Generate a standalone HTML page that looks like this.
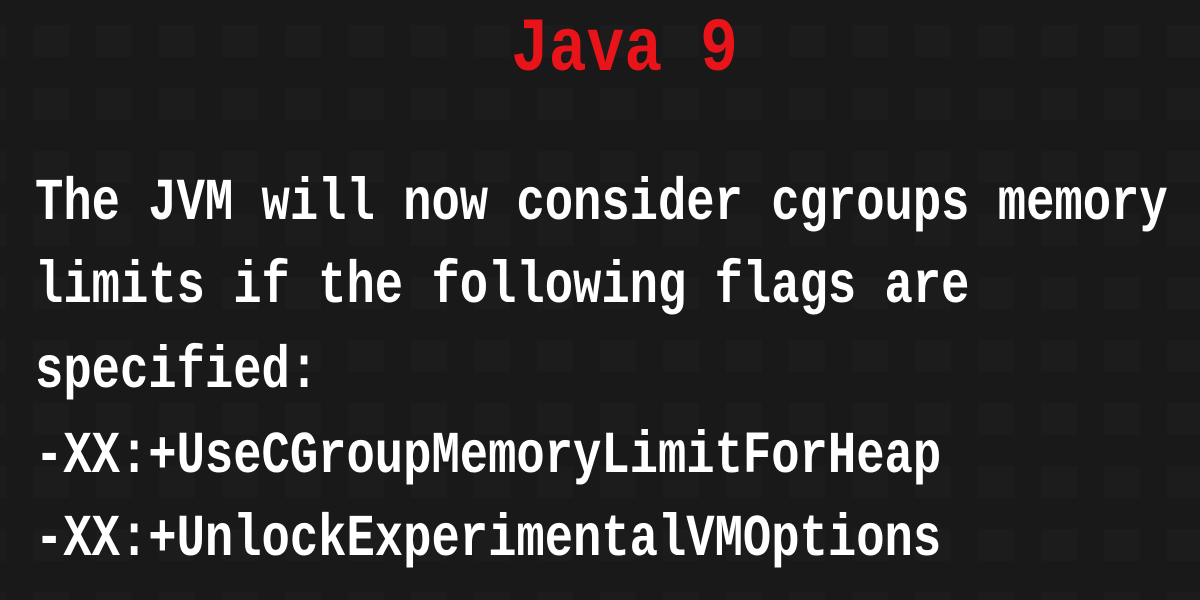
<!DOCTYPE html>
<html><head><style>
html,body{margin:0;padding:0}
body{width:1200px;height:600px;overflow:hidden;background:#191919;position:relative}
.t{position:absolute;left:0;white-space:pre;font-family:"Liberation Mono",monospace;font-weight:bold;color:#fff;transform-origin:0 100%;}
.l{font-size:47.2px;left:35px;transform:scaleY(1.25);line-height:1}
.h{color:#e8141a;font-size:63px;left:511px;transform:scaleY(1.2);line-height:1}
</style></head><body>
<svg width="1200" height="600" style="position:absolute;left:0;top:0">
<defs><pattern id="p" x="33" y="25" width="63" height="63" patternUnits="userSpaceOnUse"><rect width="36" height="32" fill="#1c1c1c"/></pattern></defs>
<rect width="1200" height="600" fill="#191919"/>
<rect width="1200" height="600" fill="url(#p)"/>
</svg>
<div class="t h" style="top:25px">Java 9</div>
<div class="t l" style="top:187px">The JVM will now consider cgroups memory</div>
<div class="t l" style="top:270px">limits if the following flags are</div>
<div class="t l" style="top:355px">specified:</div>
<div class="t l" style="top:440px">-XX:+UseCGroupMemoryLimitForHeap</div>
<div class="t l" style="top:523px">-XX:+UnlockExperimentalVMOptions</div>
</body></html>
